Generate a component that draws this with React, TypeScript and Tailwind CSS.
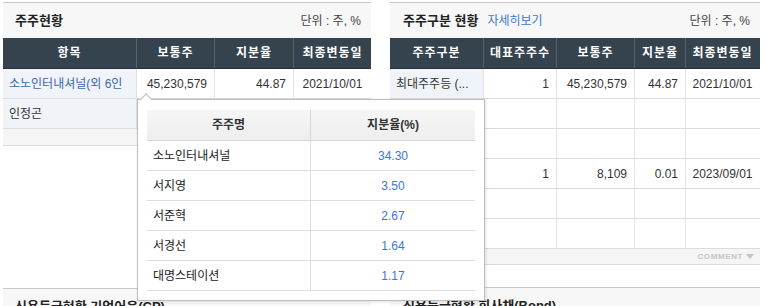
import React from "react";

const FONT = "font-['Liberation_Sans','Noto_Sans_CJK_KR',sans-serif]";

type Cell = { text?: string; align?: "left" | "right" | "center"; link?: boolean; light?: boolean };

function TitleBar({ title, extra, unit, padL }: { title: string; extra?: string; unit?: string; padL: string }) {
  return (
    <div className={`flex h-[36px] items-center justify-between border-t border-[#c9c9c9] bg-[#f7f7f7] ${padL} pr-[10px]`}>
      <div className="flex items-center gap-[9px]">
        <span className="text-[13px] font-bold text-[#222]">{title}</span>
        {extra && <span className="text-[12px] text-[#3a78d0]">{extra}</span>}
      </div>
      {unit && <span className="text-[12px] text-[#444]">{unit}</span>}
    </div>
  );
}

function Header({ cols, widths }: { cols: string[]; widths: string[] }) {
  return (
    <div className="flex h-[31px] bg-[#35434f] border-b border-[#26313a]">
      {cols.map((c, i) => (
        <div
          key={i}
          className={`${widths[i]} flex items-center justify-center text-[12px] font-bold tracking-[1px] text-white ${
            i > 0 ? "border-l border-[#55636f]" : ""
          }`}
        >
          {c}
        </div>
      ))}
    </div>
  );
}

function Row({ cells, widths }: { cells: Cell[]; widths: string[] }) {
  return (
    <div className="flex h-[30px] border-b border-[#dcdcdc]">
      {cells.map((c, i) => {
        const align =
          c.align === "right" ? "justify-end pr-[7px]" : c.align === "center" ? "justify-center" : "justify-start pl-[6px]";
        return (
          <div
            key={i}
            className={`${widths[i]} flex items-center overflow-hidden whitespace-nowrap text-[12px] ${align} ${
              i > 0 ? "border-l border-[#e3e3e3]" : ""
            } ${c.light ? "bg-[#f0f3f8]" : "bg-white"} ${c.link ? "text-[#3a68b4]" : "text-[#333]"}`}
          >
            {c.text}
          </div>
        );
      })}
    </div>
  );
}

const LW = ["w-[133px]", "w-[78px]", "w-[79px]", "w-[78px]"];
const RW = ["w-[93px]", "w-[73px]", "w-[78px]", "w-[51px]", "w-[74px]"];

function emptyRight(): Cell[] {
  return [{ light: true }, {}, {}, {}, {}];
}

const popupRows = [
  ["소노인터내셔널", "34.30"],
  ["서지영", "3.50"],
  ["서준혁", "2.67"],
  ["서경선", "1.64"],
  ["대명스테이션", "1.17"],
];

export default function App() {
  return (
    <div className={`relative h-[306px] w-[773px] overflow-hidden bg-white ${FONT}`}>
      <div className="flex pl-[3px] pt-[2px]">
        {/* Left panel */}
        <div className="flex w-[368px] flex-col">
          <TitleBar title="주주현황" unit="단위 : 주, %" padL="pl-[12px]" />
          <Header cols={["항목", "보통주", "지분율", "최종변동일"]} widths={LW} />
          <Row
            widths={LW}
            cells={[
              { text: "소노인터내셔널(외 6인", link: true, light: true },
              { text: "45,230,579", align: "right" },
              { text: "44.87", align: "right" },
              { text: "2021/10/01", align: "center" },
            ]}
          />
          <Row widths={LW} cells={[{ text: "인정곤", light: true }, { light: true }, { light: true }, { light: true }]} />
          <div className="h-[17px] border-b border-[#dcdcdc] bg-[#f5f5f5]" />
          <div className="h-[142px]" />
          <TitleBar title="신용등급현황 기업어음(CP)" padL="pl-[12px]" />
        </div>

        {/* Right panel */}
        <div className="ml-[19px] flex w-[370px] flex-col">
          <TitleBar title="주주구분 현황" extra="자세히보기" unit="단위 : 주, %" padL="pl-[13px]" />
          <Header cols={["주주구분", "대표주주수", "보통주", "지분율", "최종변동일"]} widths={RW} />
          <Row
            widths={RW}
            cells={[
              { text: "최대주주등 (...", light: true },
              { text: "1", align: "right" },
              { text: "45,230,579", align: "right" },
              { text: "44.87", align: "right" },
              { text: "2021/10/01", align: "center" },
            ]}
          />
          <Row widths={RW} cells={emptyRight()} />
          <Row widths={RW} cells={emptyRight()} />
          <Row
            widths={RW}
            cells={[
              { light: true },
              { text: "1", align: "right" },
              { text: "8,109", align: "right" },
              { text: "0.01", align: "right" },
              { text: "2023/09/01", align: "center" },
            ]}
          />
          <Row widths={RW} cells={emptyRight()} />
          <Row widths={RW} cells={emptyRight()} />
          <div className="flex h-[16px] items-center justify-end gap-[3px] border-b border-[#dcdcdc] bg-[#f5f5f5] pr-[6px]">
            <span className="text-[8px] font-bold tracking-[0.6px] text-[#c4c4c4]">COMMENT</span>
            <svg width="8" height="5" viewBox="0 0 8 5">
              <path d="M0 0 H8 L4 5 Z" fill="#c4c4c4" />
            </svg>
          </div>
          <div className="h-[22px]" />
          <TitleBar title="신용등급현황 회사채(Bond)" padL="pl-[13px]" />
        </div>
      </div>

      {/* Popup */}
      <div className="absolute left-[137px] top-[99px] h-[202px] w-[348px] border border-[#bdbdbd] bg-white px-[9px] pt-[10px] shadow-[1px_1px_3px_rgba(0,0,0,0.12)]">
        <div className="absolute -top-[5px] left-[4px] h-[8px] w-[8px] rotate-45 border-l border-t border-[#bdbdbd] bg-white" />
        <div className="flex h-[31px] border-b border-[#d6d6d6] bg-gradient-to-b from-[#f6f6f6] to-[#eeeeee]">
          <div className="flex w-[163px] items-center justify-center text-[12px] font-bold text-[#333]">주주명</div>
          <div className="flex w-[165px] items-center justify-center border-l border-[#d6d6d6] text-[12px] font-bold text-[#333]">
            지분율(%)
          </div>
        </div>
        {popupRows.map(([n, v]) => (
          <div key={n} className="flex h-[30px] border-b border-[#dedede]">
            <div className="flex w-[163px] items-center pl-[6px] text-[12px] text-[#222]">{n}</div>
            <div className="flex w-[165px] items-center justify-center border-l border-[#dedede] text-[12px] text-[#3d74e0]">
              {v}
            </div>
          </div>
        ))}
      </div>
    </div>
  );
}
